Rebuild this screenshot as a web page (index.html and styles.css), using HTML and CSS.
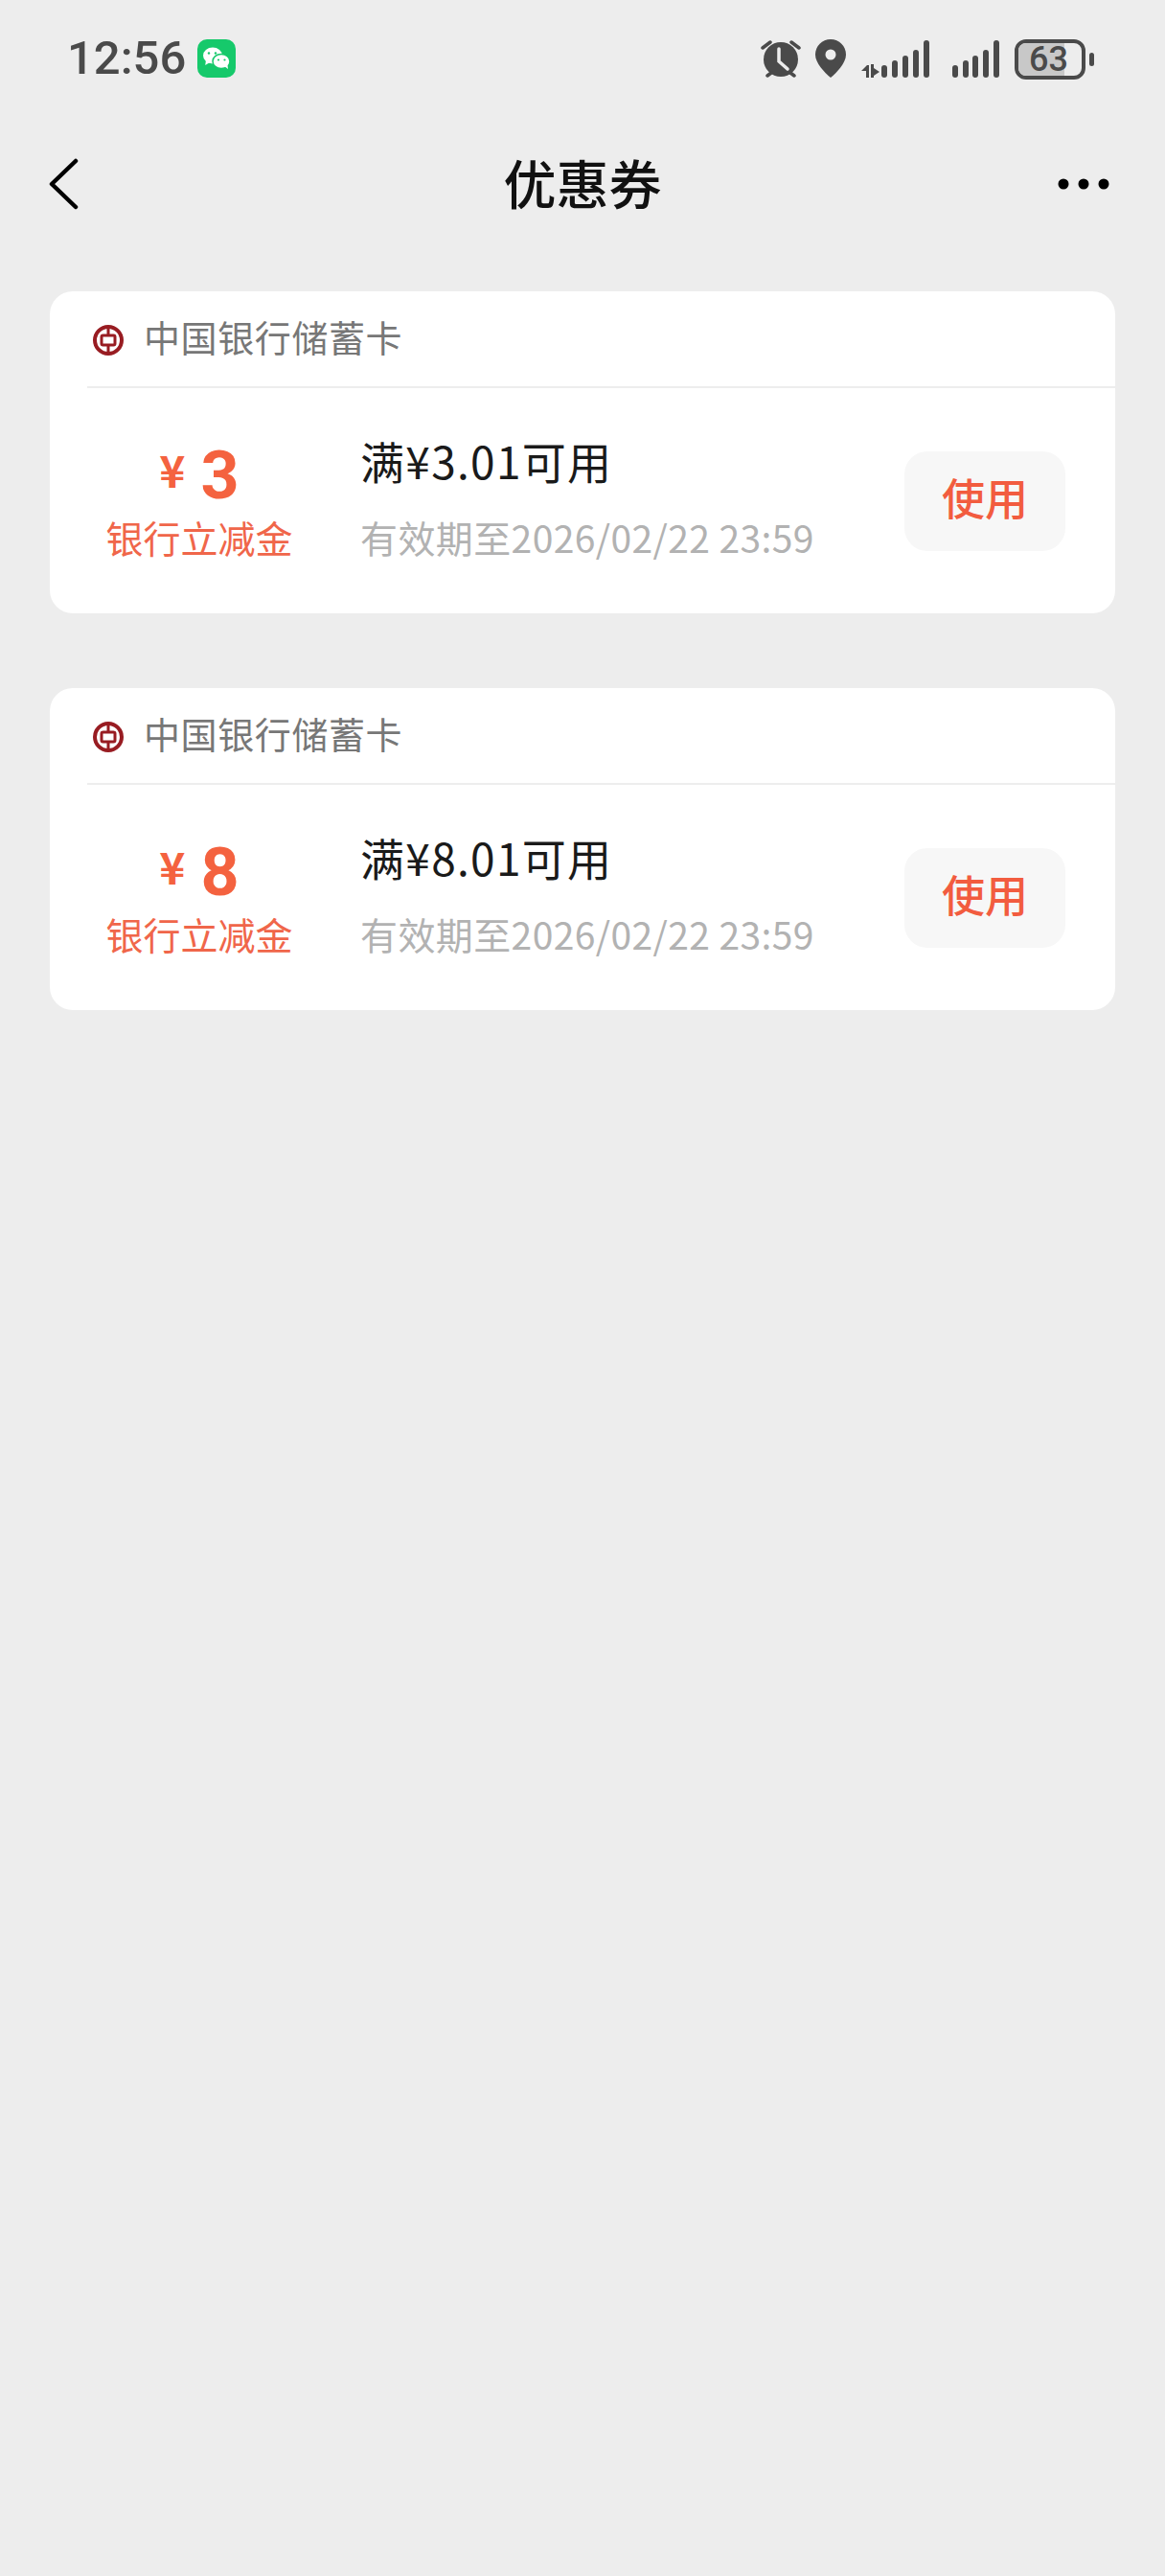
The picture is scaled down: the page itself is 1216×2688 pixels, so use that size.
FILE: index.html
```html
<!DOCTYPE html>
<html lang="zh-CN">
<head>
  <meta charset="UTF-8">
  <meta name="viewport" content="width=device-width, initial-scale=1.0">
  <title>优惠券</title>
  <link rel="stylesheet" href="styles.css">
</head>
<body>
<!-- Status bar -->
<div class="status-bar">
  <div class="status-left">
    <span class="time">12:56</span>
    <svg class="wechat" width="40" height="40" viewBox="0 0 40 40">
      <rect width="40" height="40" rx="10" fill="#16c96b"/>
      <ellipse cx="16" cy="17" rx="10" ry="8.500" fill="#fff"/>
      <path d="M9 22l-.8 5 5-3z" fill="#fff"/>
      <ellipse cx="25" cy="23" rx="9" ry="7.500" fill="#fff" stroke="#16c96b" stroke-width="1.500"/>
      <path d="M28 28l4 3-.6-5z" fill="#fff"/>
      <circle cx="12" cy="14.500" r="1.200" fill="#16c96b"/>
      <circle cx="19" cy="14.500" r="1.200" fill="#16c96b"/>
      <circle cx="22" cy="21.500" r="1.100" fill="#16c96b"/>
      <circle cx="28.500" cy="21.500" r="1.100" fill="#16c96b"/>
    </svg>
  </div>
  <div class="status-right">
    <svg class="alarm" width="42" height="40" viewBox="0 0 42 40">
      <circle cx="21" cy="21" r="18" fill="#4a4a4a"/>
      <path d="M2 9l8-6M40 9l-8-6M7 38l4-3M35 38l-4-3" stroke="#4a4a4a" stroke-width="3.500" stroke-linecap="round" fill="none"/>
      <path d="M19 10v13l9 8" stroke="#ededed" stroke-width="3.500" stroke-linecap="round" fill="none"/>
    </svg>
    <svg class="pin" width="32" height="40" viewBox="0 0 32 40">
      <path d="M16 0C7 0 0 7 0 16c0 9 10 19 16 24 6-5 16-15 16-24C32 7 25 0 16 0z" fill="#4a4a4a"/>
      <circle cx="16" cy="16" r="5.500" fill="#ededed"/>
    </svg>
    <svg class="signal-a" width="71" height="40" viewBox="0 0 71 40">
      <path d="M0 33l6-6h2v13H5v-7zM10 26h3v14h-3zM13 30l6 4-6 4z" fill="#4a4a4a"/>
      <g fill="#4a4a4a">
        <rect x="21" y="27" width="6" height="13" rx="3"/>
        <rect x="32" y="22" width="6" height="18" rx="3"/>
        <rect x="43" y="17" width="6" height="23" rx="3"/>
        <rect x="54" y="11" width="6" height="29" rx="3"/>
        <rect x="65" y="1" width="6" height="39" rx="3"/>
      </g>
    </svg>
    <svg class="signal-b" width="49" height="40" viewBox="0 0 49 40">
      <g fill="#4a4a4a">
        <rect x="0" y="27" width="6" height="13" rx="3"/>
        <rect x="11" y="22" width="6" height="18" rx="3"/>
        <rect x="21" y="17" width="6" height="23" rx="3"/>
        <rect x="32" y="11" width="6" height="29" rx="3"/>
        <rect x="43" y="1" width="6" height="39" rx="3"/>
      </g>
    </svg>
    <div class="battery">
      <div class="battery-body">
        <div class="battery-fill"></div>
        <span class="battery-num">63</span>
      </div>
      <div class="battery-nub"></div>
    </div>
  </div>
</div>

<!-- Nav bar -->
<div class="nav-bar">
  <svg class="back-icon" width="32" height="54" viewBox="0 0 32 54">
    <path d="M29 3L4 27l25 24" stroke="#000" stroke-width="4.500" stroke-linecap="round" stroke-linejoin="round" fill="none"/>
  </svg>
  <h1 class="nav-title">优惠券</h1>
  <svg class="more-icon" width="54" height="12" viewBox="0 0 54 12">
    <circle cx="6" cy="6" r="5.500"/>
    <circle cx="27" cy="6" r="5.500"/>
    <circle cx="48" cy="6" r="5.500"/>
  </svg>
</div>

<div class="coupon-list">
  <div class="coupon-card">
    <div class="card-head">
      <svg class="bank-logo" width="36" height="36" viewBox="0 0 36 36">
        <circle cx="18" cy="18" r="14" fill="none" stroke="#981c22" stroke-width="4"/>
        <rect x="11" y="13" width="14" height="10" rx="1.500" fill="none" stroke="#981c22" stroke-width="3"/>
        <path d="M18 4v9M18 23v9" stroke="#981c22" stroke-width="3"/>
      </svg>
      <span class="bank-name">中国银行储蓄卡</span>
    </div>
    <div class="card-body">
      <div class="amount-col">
        <div class="amount"><span class="yen">¥</span><span class="value">3</span></div>
        <div class="amount-label">银行立减金</div>
      </div>
      <div class="info-col">
        <div class="rule">满¥3.01可用</div>
        <div class="expire">有效期至2026/02/22 23:59</div>
      </div>
      <button class="use-btn">使用</button>
    </div>
  </div>

  <div class="coupon-card">
    <div class="card-head">
      <svg class="bank-logo" width="36" height="36" viewBox="0 0 36 36">
        <circle cx="18" cy="18" r="14" fill="none" stroke="#981c22" stroke-width="4"/>
        <rect x="11" y="13" width="14" height="10" rx="1.500" fill="none" stroke="#981c22" stroke-width="3"/>
        <path d="M18 4v9M18 23v9" stroke="#981c22" stroke-width="3"/>
      </svg>
      <span class="bank-name">中国银行储蓄卡</span>
    </div>
    <div class="card-body">
      <div class="amount-col">
        <div class="amount"><span class="yen">¥</span><span class="value">8</span></div>
        <div class="amount-label">银行立减金</div>
      </div>
      <div class="info-col">
        <div class="rule">满¥8.01可用</div>
        <div class="expire">有效期至2026/02/22 23:59</div>
      </div>
      <button class="use-btn">使用</button>
    </div>
  </div>
</div>
</body>
</html>
```

FILE: styles.css
```css
body {
  margin: 0;
  background-color: #ededed;
  font-family: "Noto Sans CJK SC", "Noto Sans", sans-serif;
  height: 2688px;
  overflow: hidden;
}

/* Status bar */
.status-bar {
  height: 156px;
  box-sizing: border-box;
  padding: 41px 74px 0 70px;
  display: flex;
  justify-content: space-between;
  align-items: flex-start;
}

.status-left {
  display: flex;
  align-items: center;
  height: 40px;
}

.time {
  font-family: Roboto, sans-serif;
  font-size: 49px;
  font-weight: 500;
  line-height: 40px;
  color: #4a4a4a;
  width: 136px;
}

.status-right {
  display: flex;
  align-items: flex-start;
  height: 40px;
}

.alarm { margin-right: 15px; }
.pin { margin-right: 16px; }
.signal-a { margin-right: 24px; }
.signal-b { margin-right: 16px; }

.battery {
  display: flex;
  align-items: center;
}

.battery-body {
  width: 74px;
  height: 42px;
  box-sizing: border-box;
  border: 4px solid #4a4a4a;
  border-radius: 12px;
  overflow: hidden;
  position: relative;
  display: flex;
  justify-content: center;
  align-items: center;
}

.battery-fill {
  position: absolute;
  left: 0;
  top: 0;
  bottom: 0;
  width: 72%;
  background-color: #c8c8c8;
}

.battery-num {
  position: relative;
  font-family: Roboto, sans-serif;
  font-size: 36px;
  font-weight: 500;
  line-height: 34px;
  color: #4a4a4a;
  margin-right: 3px;
}

.battery-nub {
  width: 5px;
  height: 14px;
  margin-left: 4px;
  border-radius: 3px;
  background-color: #4a4a4a;
}

/* Nav bar */
.nav-bar {
  height: 72px;
  padding: 0 58px 0 50px;
  display: flex;
  justify-content: space-between;
  align-items: center;
  position: relative;
}

.nav-title {
  margin: 0;
  position: absolute;
  left: 0;
  right: 0;
  top: -3px;
  text-align: center;
  font-size: 55px;
  font-weight: 500;
  color: #111;
  line-height: 72px;
}

/* Coupon cards */
.coupon-list {
  padding: 76px 52px 0;
  display: flex;
  flex-direction: column;
  gap: 78px;
}

.coupon-card {
  height: 336px;
  background-color: #fff;
  border-radius: 24px;
  overflow: hidden;
}

.card-head {
  height: 101px;
  box-sizing: border-box;
  margin-left: 39px;
  border-bottom: 2px solid #ededed;
  padding: 0 0 6px 4px;
  display: flex;
  align-items: center;
}

.bank-logo {
  margin-right: 19px;
  margin-top: 9px;
}

.bank-name {
  font-size: 38px;
  line-height: 50px;
  letter-spacing: 0.6px;
  color: #777;
}

.card-body {
  height: 235px;
  display: flex;
  align-items: center;
}

.amount-col {
  width: 326px;
  padding: 9px 14px 0 0;
  box-sizing: border-box;
  text-align: center;
}

.amount {
  height: 56px;
  line-height: 56px;
  color: #f4623f;
  font-family: Roboto, sans-serif;
  font-weight: 700;
  display: flex;
  justify-content: center;
  align-items: flex-start;
  gap: 16px;
}

.yen {
  font-family: "Noto Sans CJK SC", sans-serif;
  font-size: 46px;
  line-height: 42px;
}

.value {
  font-size: 70px;
  font-weight: 700;
}

.amount-label {
  margin-top: 10px;
  font-size: 39px;
  line-height: 52px;
  color: #f0664a;
}

.info-col {
  flex: 1;
  padding-bottom: 10px;
  margin-left: -2px;
}

.rule {
  font-size: 46px;
  line-height: 60px;
  letter-spacing: 1.3px;
  color: #1a1a1a;
}

.expire {
  margin-top: 24px;
  font-size: 39px;
  line-height: 52px;
  letter-spacing: 0.4px;
  color: #b2b2b2;
}

.use-btn {
  width: 168px;
  height: 104px;
  margin-right: 52px;
  padding: 0 0 8px;
  border: 0;
  border-radius: 24px;
  background-color: #f7f7f7;
  color: #f25c3f;
  font-family: inherit;
  font-size: 45px;
  font-weight: 500;
}
```
